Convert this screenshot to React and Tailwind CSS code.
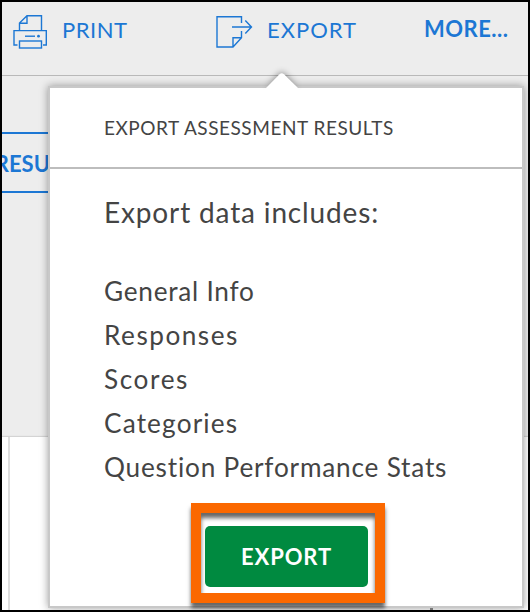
function PrintIcon() {
  return (
    <svg className="h-[35px] w-[35px] shrink-0" viewBox="0 0 35 35" fill="none" stroke="#1c77d4" strokeWidth="1.4">
      <path d="M6.5 16.5V9L14 1.8H28.5V16.5M6.5 9.3H14V1.8" />
      <path d="M4.5 31H1V16.6H33.3V31H30" />
      <rect x="6.5" y="27" width="22" height="7" />
      <path d="M12 22.2H22" />
      <circle cx="25.5" cy="22.2" r="1.4" fill="#1c77d4" stroke="none" />
    </svg>
  );
}

function ExportIcon() {
  return (
    <svg className="h-[33px] w-[37px] shrink-0" viewBox="0 0 37 33" fill="none" stroke="#1c77d4" strokeWidth="1.4">
      <path d="M25.5 8V1.8H1V32H17L25.5 22.8V16M17 32V22.8H25.5" />
      <path d="M16 12H35.5M29.3 5.5L35.5 12L29.3 18.6" />
    </svg>
  );
}

const items = [
  ["General Info", "tracking-[0.75px]"],
  ["Responses", "tracking-[1.5px]"],
  ["Scores", "tracking-[1.6px]"],
  ["Categories", "tracking-[1.15px]"],
  ["Question Performance Stats", "tracking-[0.8px]"],
];

export default function App() {
  return (
    <div className="relative flex h-[612px] w-[530px] flex-col overflow-hidden border-2 border-black bg-[#ededed] font-['Lato',sans-serif] text-[#444]">
      <header className="flex h-[74px] shrink-0 items-start whitespace-nowrap border-b border-[#b9b9b9] pl-[11px] text-[22px] leading-[28px] text-[#1c77d4]">
        <div className="flex w-[203px] items-start pt-[12px]">
          <PrintIcon />
          <span className="ml-[14px] mt-[2px] tracking-[0.5px]">PRINT</span>
        </div>
        <div className="flex w-[208px] items-start pt-[13px]">
          <ExportIcon />
          <span className="ml-[14px] mt-[1px] tracking-[1px]">EXPORT</span>
        </div>
        <span className="pt-[13px] font-bold tracking-[0.5px]">MORE...</span>
      </header>
      <main className="flex grow flex-col">
        <div className="mt-[56px] flex h-[61px] w-[60px] shrink-0 items-center justify-end overflow-hidden border-y-2 border-[#1c77d4] pr-[12px] pt-px text-[22px] font-bold text-[#1c77d4]">
          RESU
        </div>
        <div className="mt-[244px] grow bg-white pl-[6px] shadow-[0_-1px_1px_#d4d4d4]">
          <div className="h-full border-l-2 border-[#dedede]" />
        </div>
      </main>

      <section className="absolute left-[46px] top-[84px] flex h-[522px] w-[476px] flex-col whitespace-nowrap border-2 border-[#c8c8c8] bg-white shadow-[0_0_8px_rgba(0,0,0,0.38)]">
        <svg className="absolute left-[208px] top-[-22px] h-[24px] w-[48px]" viewBox="0 0 48 24">
          <path
            className="drop-shadow-[0_-1px_3px_rgba(0,0,0,0.4)]"
            d="M9 21L21.5 8.2Q23.8 6.2 26 8.2L39 21Z"
            fill="white"
          />
          <path d="M9 21H39L42 24H6Z" fill="white" />
        </svg>
        <h2 className="flex h-[81px] shrink-0 items-center border-b-2 border-[#bdbdbd] pl-[54px] text-[19px] leading-[24px] tracking-[0.53px]">
          EXPORT ASSESSMENT RESULTS
        </h2>
        <h1 className="ml-[54px] mt-[25px] text-[28px] leading-[36px] tracking-[0.85px]">Export data includes:</h1>
        <ul className="ml-[54px] mt-[39px] text-[26.2px] leading-[44px]">
          {items.map(([label, tracking]) => (
            <li key={label} className={tracking}>{label}</li>
          ))}
        </ul>
        <div className="ml-[141px] mt-[14px] flex h-[100px] w-[194px] shrink-0 justify-center border-[10px] border-[#fb6800] pt-[13px] shadow-[0_5px_4px_rgba(0,0,0,0.6),inset_0_5px_4px_rgba(0,0,0,0.6)]">
          <button className="mr-[3px] h-[61px] w-[163px] rounded-[5px] bg-[#008a40] pb-px text-[22px] font-bold tracking-[0.9px] text-white">
            EXPORT
          </button>
        </div>
      </section>
      <div className="absolute left-[428px] top-[606px] h-[2px] w-[3px] bg-[#777]" />
    </div>
  );
}
